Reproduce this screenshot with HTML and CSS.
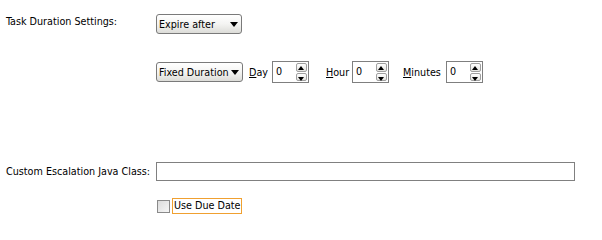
FILE: index.html
```html
<!DOCTYPE html>
<html>
<head>
<meta charset="utf-8">
<link rel="stylesheet" href="styles.css">
</head>
<body>
<div class="form">
  <div class="row row-duration">
    <div class="label">Task Duration Settings:</div>
    <div class="field">
      <div class="combo combo-expire"><span class="combo-text">Expire after</span><span class="combo-arrow"></span></div>
    </div>
  </div>
  <div class="row row-fixed">
    <div class="label"></div>
    <div class="field inline">
      <div class="combo combo-fixed"><span class="combo-text">Fixed Duration</span><span class="combo-arrow"></span></div>
      <span class="unit unit-day"><u>D</u>ay</span>
      <div class="spinner"><span class="spin-value">0</span><span class="spin-btns"><span class="spin-btn up"></span><span class="spin-btn down"></span></span></div>
      <span class="unit unit-hour"><u>H</u>our</span>
      <div class="spinner"><span class="spin-value">0</span><span class="spin-btns"><span class="spin-btn up"></span><span class="spin-btn down"></span></span></div>
      <span class="unit unit-min"><u>M</u>inutes</span>
      <div class="spinner"><span class="spin-value">0</span><span class="spin-btns"><span class="spin-btn up"></span><span class="spin-btn down"></span></span></div>
    </div>
  </div>
  <div class="row row-class">
    <div class="label">Custom Escalation Java Class:</div>
    <div class="field">
      <div class="textbox"></div>
    </div>
  </div>
  <div class="row row-check">
    <div class="label"></div>
    <div class="field inline">
      <span class="checkbox"></span>
      <span class="check-label">Use Due Date</span>
    </div>
  </div>
</div>
</body>
</html>
```
FILE: styles.css
```css
html, body {
  margin: 0;
  padding: 0;
  background: #ffffff;
}
body {
  font-family: "DejaVu Sans Condensed", "Liberation Sans", Arial, sans-serif;
  font-size: 10.7px;
  color: #000;
}
.form {
  display: flex;
  flex-direction: column;
  padding-left: 6px;
  width: 570px;
}
.row {
  display: flex;
  align-items: flex-start;
}
.label {
  width: 150px;
  flex: none;
  line-height: 13px;
  white-space: nowrap;
}
.field {
  flex: 1;
  display: flex;
}
.inline {
  align-items: center;
}
.row-duration { margin-top: 14px; }
.row-duration .label { padding-top: 1px; }
.row-fixed { margin-top: 27px; }
.row-class { margin-top: 79px; align-items: center; }
.row-check { margin-top: 17px; }

.combo {
  box-sizing: border-box;
  height: 20px;
  border: 1px solid #7a7a7a;
  border-radius: 3px;
  background: linear-gradient(#ffffff, #f4f4f2 50%, #dcdcd8);
  display: flex;
  align-items: center;
  padding-left: 2px;
  padding-right: 3px;
}
.combo-expire { width: 86px; }
.combo-fixed { width: 87px; height: 20px; }
.combo-text {
  flex: 1;
  white-space: nowrap;
  line-height: 13px;
}
.combo-arrow {
  width: 0;
  height: 0;
  border-left: 4px solid transparent;
  border-right: 4px solid transparent;
  border-top: 5px solid #000;
  margin-top: 1px;
}
.unit { white-space: nowrap; flex: none; }
.unit-day { margin-left: 6px; width: 23px; }
.unit-hour { margin-left: 17px; width: 26px; }
.unit-min { margin-left: 14px; width: 43px; }

.spinner {
  box-sizing: border-box;
  width: 37px;
  height: 22px;
  border: 1px solid #7f7f7f;
  background: #fff;
  display: flex;
  flex: none;
}
.spin-value {
  flex: 1;
  padding-left: 3px;
  line-height: 19px;
}
.spin-btns {
  width: 11px;
  display: flex;
  flex-direction: column;
  gap: 1px;
  padding: 1px 1px 1px 0;
}
.spin-btn {
  flex: 1;
  border: 1px solid #a0a0a0;
  border-radius: 2px;
  background: linear-gradient(#ffffff, #e4e4e0);
  position: relative;
}
.spin-btn::after {
  content: "";
  position: absolute;
  left: 1px;
  width: 0;
  height: 0;
  border-left: 3.5px solid transparent;
  border-right: 3.5px solid transparent;
}
.spin-btn.up::after {
  top: 2px;
  border-bottom: 4px solid #000;
}
.spin-btn.down::after {
  top: 3px;
  border-top: 4px solid #000;
}

.textbox {
  box-sizing: border-box;
  width: 419px;
  height: 19px;
  border: 1px solid #808080;
  background: #fff;
}

.checkbox {
  box-sizing: border-box;
  width: 13px;
  height: 13px;
  margin-left: 1px;
  border: 1px solid #8a8a8a;
  background: linear-gradient(135deg, #dcdcdc, #f6f6f6);
}
.check-label {
  box-sizing: border-box;
  margin-left: 2px;
  height: 16px;
  line-height: 14px;
  padding: 0 1px;
  border: 1px solid #f0a030;
  white-space: nowrap;
}
```
